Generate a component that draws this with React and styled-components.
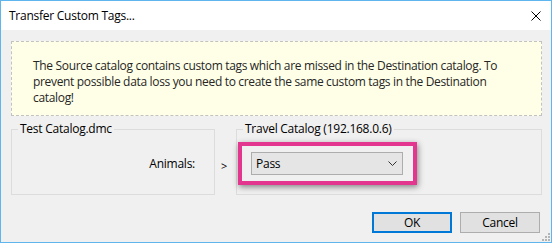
import React from "react";
import styled, { createGlobalStyle } from "styled-components";

const GlobalStyle = createGlobalStyle`
  html, body {
    margin: 0;
    padding: 0;
    background: #ffffff;
  }
  body {
    font-family: "Open Sans", "Noto Sans", sans-serif;
    font-size: 12px;
    letter-spacing: -0.25px;
  }
`;

const App = () => (
  <>
    <GlobalStyle />
    <Window>
      <TitleBar>
        <Title>Transfer Custom Tags...</Title>
        <CloseButton aria-label="Close">
          <svg width="10" height="10" viewBox="0 0 10 10">
            <path d="M0.5 0.5 L9.5 9.5 M9.5 0.5 L0.5 9.5" stroke="#000" strokeWidth="1" />
          </svg>
        </CloseButton>
      </TitleBar>
      <Body>
        <InfoBox>
          The Source catalog contains custom tags which are missed in the Destination catalog. To
          prevent possible data loss you need to create the same custom tags in the Destination
          catalog!
        </InfoBox>
        <Groups>
          <Group>
            <Legend>Test Catalog.dmc</Legend>
            <SourceLabel>Animals:</SourceLabel>
          </Group>
          <Arrow>&gt;</Arrow>
          <Group>
            <Legend>Travel Catalog (192.168.0.6)</Legend>
            <Highlight>
              <Combo>
                <span>Pass</span>
                <svg width="9" height="5" viewBox="0 0 9 5">
                  <path d="M0.5 0.5 L4.5 4.5 L8.5 0.5" stroke="#333" fill="none" strokeWidth="1" />
                </svg>
              </Combo>
            </Highlight>
          </Group>
        </Groups>
        <Footer>
          <Button $primary>OK</Button>
          <Button>Cancel</Button>
        </Footer>
        <Grip width="10" height="10" viewBox="0 0 10 10">
          <rect x="7" y="1" width="2" height="2" fill="#b4b4b4" />
          <rect x="4" y="4" width="2" height="2" fill="#b4b4b4" />
          <rect x="7" y="4" width="2" height="2" fill="#b4b4b4" />
          <rect x="1" y="7" width="2" height="2" fill="#b4b4b4" />
          <rect x="4" y="7" width="2" height="2" fill="#b4b4b4" />
          <rect x="7" y="7" width="2" height="2" fill="#b4b4b4" />
        </Grip>
      </Body>
    </Window>
  </>
);

const Window = styled.div`
  width: 552px;
  height: 243px;
  box-sizing: border-box;
  border: 1px solid #5fb5ee;
  background: #f0f0f0;
  display: flex;
  flex-direction: column;
  color: #000;
`;

const TitleBar = styled.div`
  height: 29px;
  background: #ffffff;
  display: flex;
  align-items: center;
  justify-content: space-between;
  padding: 0 10px 0 8px;
`;

const Title = styled.div`
  font-size: 12px;
  color: #000;
`;

const CloseButton = styled.div`
  width: 10px;
  height: 10px;
  display: flex;
  margin-top: 1px;
`;

const Body = styled.div`
  flex: 1;
  position: relative;
  padding: 11px 9px 0 10px;
  display: flex;
  flex-direction: column;
`;

const InfoBox = styled.div`
  box-sizing: border-box;
  width: 531px;
  height: 75px;
  border: 1px dashed #c2c2c2;
  background: #ffffe7;
  padding: 16px 30px 0 21px;
  line-height: 16px;
  letter-spacing: -0.33px;
  color: #262626;
`;

const Groups = styled.div`
  display: grid;
  grid-template-columns: 204px 21px 306px;
  margin-top: 5px;
  height: 74px;
`;

const Group = styled.fieldset`
  margin: 0;
  padding: 0 0 8px 0;
  border: 1px solid #dcdcdc;
  border-radius: 0;
  min-width: 0;
  display: flex;
  align-items: center;
  justify-content: flex-end;
  &:last-child {
    justify-content: flex-start;
  }
`;

const Legend = styled.legend`
  padding: 0 2px;
  margin-left: 6px;
  line-height: 16px;
  color: #000;
`;

const SourceLabel = styled.span`
  margin-right: 19px;
  margin-top: 4px;
`;

const Arrow = styled.div`
  display: flex;
  align-items: center;
  padding-left: 6px;
  padding-top: 14px;
  font-size: 11px;
`;

const Highlight = styled.div`
  margin-left: 1px;
  margin-top: 4px;
  padding: 6px 10px 6px 9px;
  border: 4px solid #e3368f;
  box-shadow: 1px 2px 6px rgba(0, 0, 0, 0.45);
`;

const Combo = styled.div`
  box-sizing: border-box;
  width: 152px;
  height: 23px;
  border: 1px solid #adadad;
  background: #e5e5e5;
  display: flex;
  align-items: center;
  justify-content: space-between;
  padding: 0 5px 0 4px;
`;

const Footer = styled.div`
  display: flex;
  justify-content: flex-end;
  gap: 8px;
  margin-top: 17px;
  padding-right: 2px;
`;

const Button = styled.div`
  box-sizing: border-box;
  width: 80px;
  height: 21px;
  display: flex;
  align-items: center;
  justify-content: center;
  background: #e1e1e1;
  border: ${(p) => (p.$primary ? "2px solid #0078d7" : "1px solid #adadad")};
`;

const Grip = styled.svg`
  position: absolute;
  right: 0;
  bottom: 0;
`;

export default App;
